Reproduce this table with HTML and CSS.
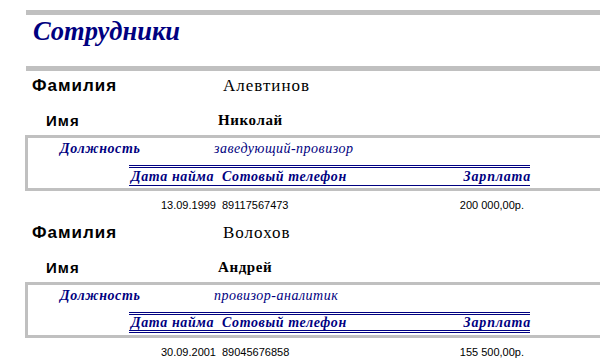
FILE: index.html
```html
<!DOCTYPE html>
<html lang="ru">
<head>
<meta charset="utf-8">
<title>Сотрудники</title>
<link rel="stylesheet" href="styles.css">
</head>
<body>
<div class="page">
  <div class="bar bar-top"></div>
  <div class="title-row"><h1 class="title">Сотрудники</h1></div>
  <div class="bar"></div>

  <div class="record">
    <div class="row row-surname">
      <span class="lbl-surname">Фамилия</span>
      <span class="val-surname">Алевтинов</span>
    </div>
    <div class="row row-name">
      <span class="lbl-name">Имя</span>
      <span class="val-name">Николай</span>
    </div>
    <div class="box">
      <div class="row row-post">
        <span class="lbl-post">Должность</span>
        <span class="val-post">заведующий-провизор</span>
      </div>
      <div class="thead">
        <span class="th th-date">Дата найма</span>
        <span class="th th-phone">Сотовый телефон</span>
        <span class="th th-salary">Зарплата</span>
      </div>
    </div>
    <div class="trow">
      <span class="td td-date">13.09.1999</span>
      <span class="td td-phone">89117567473</span>
      <span class="td td-salary">200 000,00р.</span>
    </div>
  </div>

  <div class="record">
    <div class="row row-surname">
      <span class="lbl-surname">Фамилия</span>
      <span class="val-surname">Волохов</span>
    </div>
    <div class="row row-name">
      <span class="lbl-name">Имя</span>
      <span class="val-name">Андрей</span>
    </div>
    <div class="box">
      <div class="row row-post">
        <span class="lbl-post">Должность</span>
        <span class="val-post">провизор-аналитик</span>
      </div>
      <div class="thead thead-double">
        <span class="th th-date">Дата найма</span>
        <span class="th th-phone">Сотовый телефон</span>
        <span class="th th-salary">Зарплата</span>
      </div>
    </div>
    <div class="trow">
      <span class="td td-date">30.09.2001</span>
      <span class="td td-phone">89045676858</span>
      <span class="td td-salary">155 500,00р.</span>
    </div>
  </div>
</div>
</body>
</html>
```

FILE: styles.css
```css
html, body {
  margin: 0;
  padding: 0;
  background: #ffffff;
}
.page {
  width: 600px;
  height: 362px;
  overflow: hidden;
  padding-left: 25px;
  box-sizing: border-box;
  font-family: "Liberation Serif", "Times New Roman", serif;
  color: #000;
}
.bar {
  height: 5px;
  background: #c0c0c0;
  margin-left: 1px;
}
.bar-top {
  margin-top: 10px;
}
.title-row {
  height: 51px;
  padding-left: 8px;
  box-sizing: border-box;
}
.title {
  margin: 0;
  font-family: "Liberation Serif", "Times New Roman", serif;
  font-style: italic;
  font-weight: bold;
  font-size: 26.5px;
  line-height: 30px;
  padding-top: 1px;
  color: #000080;
}
.row {
  display: flex;
  align-items: center;
}
.row-surname {
  height: 30px;
}
.lbl-surname {
  font-family: "Liberation Sans", sans-serif;
  font-weight: bold;
  font-size: 17px;
  letter-spacing: 1px;
  width: 191px;
  padding-left: 7px;
}
.val-surname {
  font-size: 17px;
  letter-spacing: 1px;
}
.row-name {
  height: 34px;
  padding-top: 4px;
  box-sizing: border-box;
}
.lbl-name {
  font-family: "Liberation Sans", sans-serif;
  font-weight: bold;
  font-size: 15px;
  letter-spacing: 1px;
  width: 172px;
  padding-left: 21px;
}
.val-name {
  font-weight: bold;
  font-size: 15px;
  letter-spacing: 0.6px;
}
.box {
  border: 3px solid #c0c0c0;
  border-right: none;
  height: 50px;
}
.row-post {
  height: 27px;
  align-items: flex-start;
  padding-top: 3px;
  box-sizing: border-box;
}
.lbl-post {
  font-style: italic;
  font-weight: bold;
  font-size: 14px;
  letter-spacing: 0.6px;
  color: #000080;
  width: 154px;
  padding-left: 32px;
}
.val-post {
  font-style: italic;
  font-size: 14px;
  letter-spacing: 0.5px;
  color: #000080;
}
.thead {
  display: flex;
  margin-left: 101px;
  width: 401px;
  border-top: 3px double #000080;
  border-bottom: 1px solid #000080;
  height: 17px;
  align-items: center;
}
.thead-double {
  border-bottom: 3px double #000080;
  height: 15px;
}
.th {
  font-style: italic;
  font-weight: bold;
  font-size: 14px;
  letter-spacing: 0.6px;
  color: #000080;
  white-space: nowrap;
}
.th-date {
  width: 93px;
  padding-left: 2px;
  box-sizing: border-box;
}
.th-phone {
  flex: 1;
}
.th-salary {
  text-align: right;
  letter-spacing: 0.8px;
  margin-right: -1px;
}
.trow {
  display: flex;
  height: 27px;
  align-items: center;
  padding-left: 104px;
  width: 502px;
  box-sizing: border-box;
  font-family: "Liberation Sans", sans-serif;
  font-size: 11px;
}
.td-date {
  width: 87px;
  text-align: right;
  padding-right: 6px;
}
.td-phone {
  flex: 1;
}
.td-salary {
  text-align: right;
  padding-right: 3px;
}
```
